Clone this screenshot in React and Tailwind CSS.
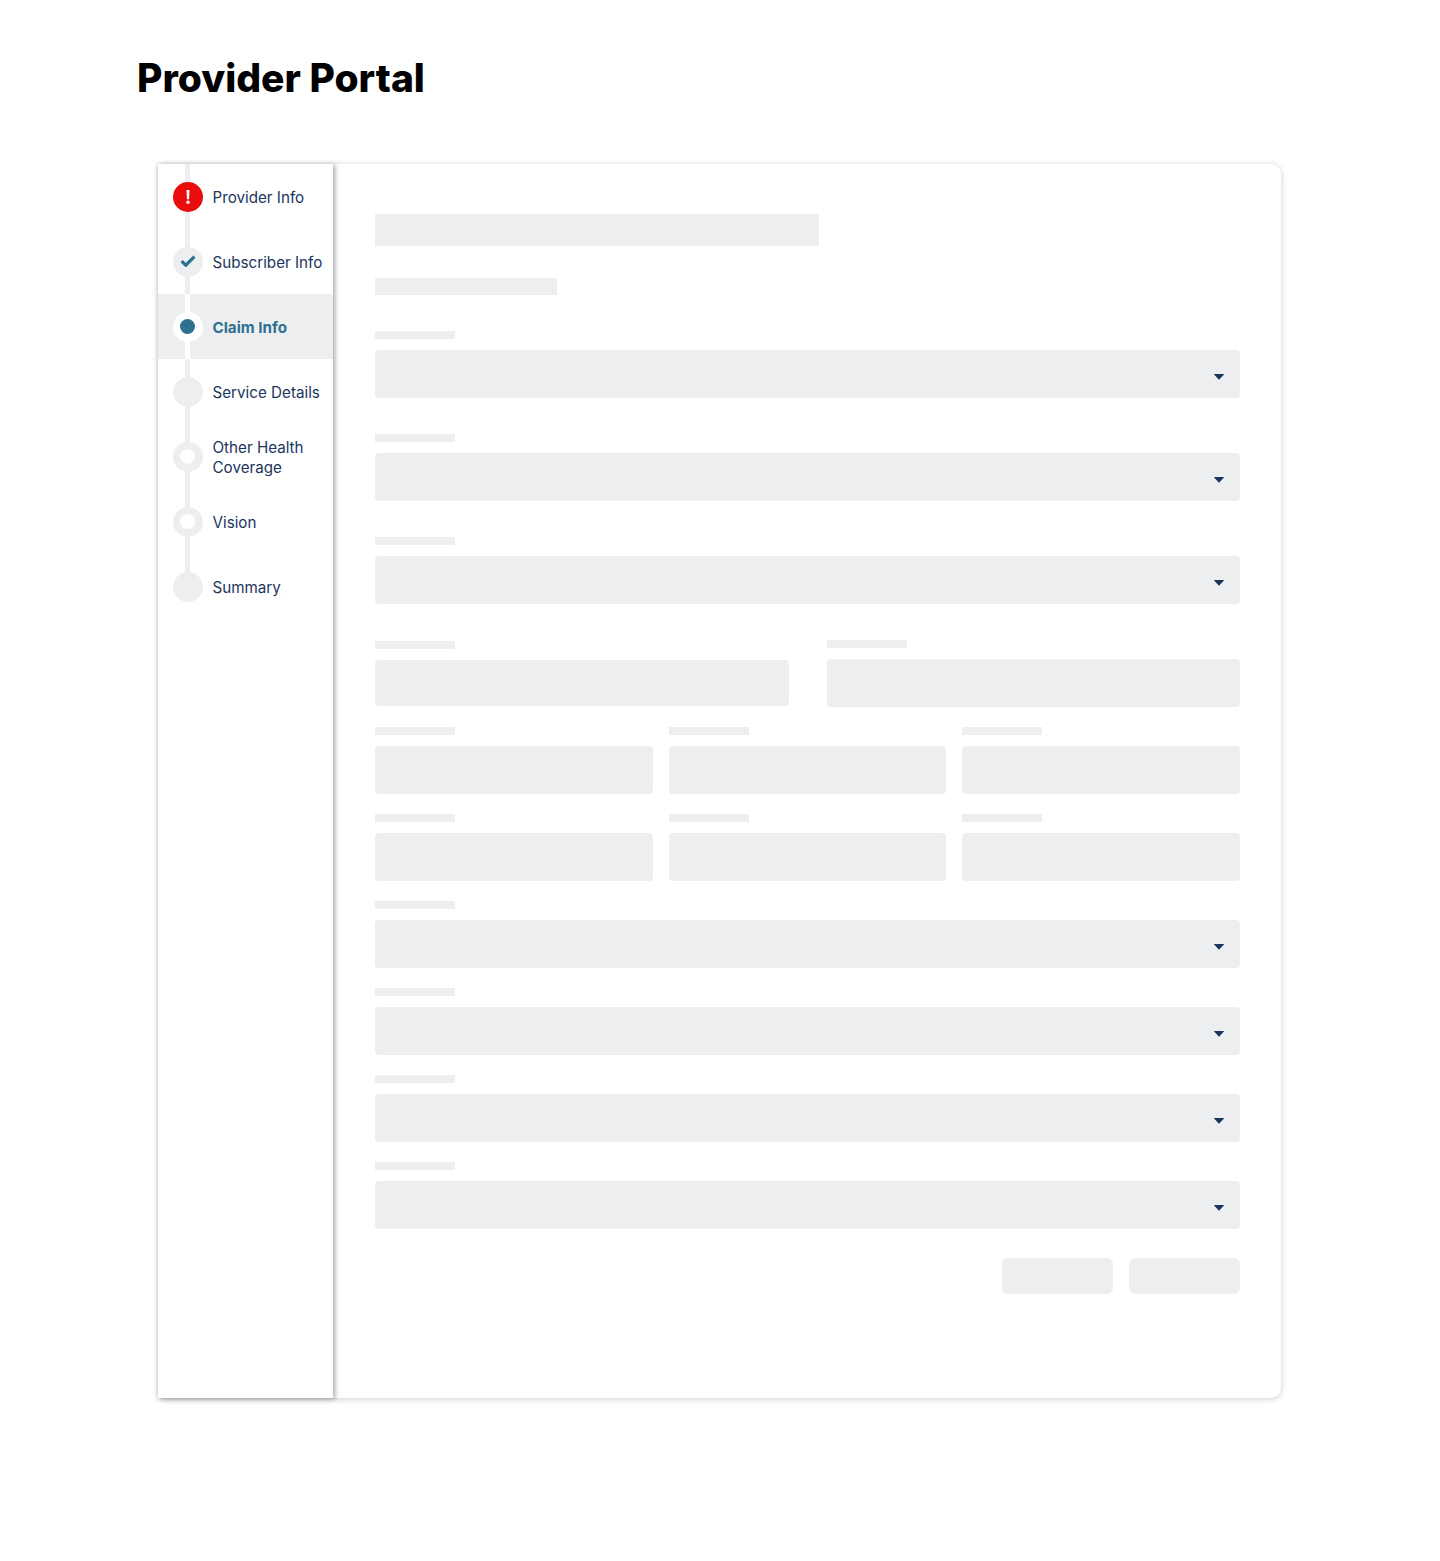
import React from 'react';

const steps = [
  { label: 'Provider Info', state: 'error' },
  { label: 'Subscriber Info', state: 'done' },
  { label: 'Claim Info', state: 'active' },
  { label: 'Service Details', state: 'filled' },
  { label: 'Other Health Coverage', state: 'ring' },
  { label: 'Vision', state: 'ring' },
  { label: 'Summary', state: 'filled' },
];

const StepDot = ({ state }) => {
  if (state === 'error') {
    return (
      <span className="relative w-[30px] h-[30px] rounded-full bg-[#e90d0d] flex items-center justify-center">
        <svg width="4" height="14" viewBox="0 0 4 14">
          <path d="M.5 0h3L3.1 9.2H.9z" fill="#fff" />
          <circle cx="2" cy="12.2" r="1.7" fill="#fff" />
        </svg>
      </span>
    );
  }
  if (state === 'done') {
    return (
      <span className="relative w-[30px] h-[30px] rounded-full bg-[#edeef0] flex items-center justify-center">
        <svg className="mb-px" width="16" height="12" viewBox="0 0 16 12">
          <path d="M1.6 6.2l4.2 4L14.4 1.6" fill="none" stroke="#2f6f8f" strokeWidth="3.2" />
        </svg>
      </span>
    );
  }
  if (state === 'active') {
    return (
      <span className="relative w-[30px] h-[30px] rounded-full bg-white flex items-center justify-center">
        <span className="w-[15px] h-[15px] rounded-full bg-[#2f6f8f]" />
      </span>
    );
  }
  if (state === 'ring') {
    return (
      <span className="relative w-[30px] h-[30px] rounded-full bg-[#edeef0] flex items-center justify-center">
        <span className="w-[15px] h-[15px] rounded-full bg-white" />
      </span>
    );
  }
  return <span className="relative w-[30px] h-[30px] rounded-full bg-[#edeef0]" />;
};

const Step = ({ step, index }) => {
  const active = step.state === 'active';
  const last = index === steps.length - 1;
  return (
    <div className={`relative h-[65px] pl-[14.5px] flex items-center gap-[10px] ${active ? 'bg-[#edeef0]' : ''}`}>
      <span
        className={`absolute left-[27px] top-0 w-[5px] ${last ? 'h-1/2' : 'h-full'} ${active ? 'bg-white' : 'bg-[#edeef0]'}`}
      />
      <StepDot state={step.state} />
      <span className={`relative flex-1 pt-0.5 text-[15.2px] leading-[20px] ${active ? 'font-bold text-[#2f6f8f]' : 'text-[#1b365d]'}`}>
        {step.label}
      </span>
    </div>
  );
};

const Label = () => <div className="w-20 h-2 bg-[#edeef0]" />;

const Select = ({ className = '' }) => (
  <div className={className}>
    <Label />
    <div className="mt-[11px] h-12 rounded bg-[#edeef0] flex items-center justify-end pr-4">
      <svg className="mt-[6px]" width="10" height="6" viewBox="0 0 10 6">
        <path d="M.3 0h9.4c.3 0 .4.3.2.5L5.3 5.6a.4.4 0 0 1-.6 0L.1.5C-.1.3 0 0 .3 0z" fill="#1b365d" />
      </svg>
    </div>
  </div>
);

const Input = ({ className = '' }) => (
  <div className={className}>
    <Label />
    <div className="mt-[11px] h-12 rounded bg-[#edeef0]" />
  </div>
);

export default function App() {
  return (
    <div className="min-h-[1561px] bg-white pt-[55px] font-['Inter','Liberation_Sans',sans-serif]">
      <h1 className="ml-[137px] text-[39px] leading-[46px] font-extrabold text-black">Provider Portal</h1>

      <div className="ml-[158px] mt-[63px] w-[1123px] h-[1234px] flex bg-white rounded-r-[10px] shadow-[0_1px_6px_rgba(0,0,0,0.2)]">
        <nav className="w-[175px] shrink-0 bg-white shadow-[2px_1px_5px_rgba(0,0,0,0.35)]">
          {steps.map((step, i) => (
            <Step key={step.label} step={step} index={i} />
          ))}
        </nav>

        <main className="ml-[42px] w-[865px] pt-[50px]">
          <div className="w-[444px] h-8 bg-[#edeef0]" />
          <div className="mt-8 w-[182px] h-[17px] bg-[#edeef0]" />

          <Select className="mt-9" />
          <Select className="mt-9" />
          <Select className="mt-9" />

          <div className="mt-9 flex gap-[38px] items-start">
            <div className="flex-1 pt-px">
              <Label />
              <div className="mt-[11px] h-[46px] rounded bg-[#edeef0]" />
            </div>
            <Input className="flex-1" />
          </div>

          <div className="mt-5 grid grid-cols-3 gap-4">
            <Input />
            <Input />
            <Input />
          </div>
          <div className="mt-5 grid grid-cols-3 gap-4">
            <Input />
            <Input />
            <Input />
          </div>

          <Select className="mt-5" />
          <Select className="mt-5" />
          <Select className="mt-5" />
          <Select className="mt-5" />

          <div className="mt-[29px] flex justify-end gap-4">
            <div className="w-[111px] h-9 rounded-md bg-[#edeef0]" />
            <div className="w-[111px] h-9 rounded-md bg-[#edeef0]" />
          </div>
        </main>
      </div>
    </div>
  );
}
